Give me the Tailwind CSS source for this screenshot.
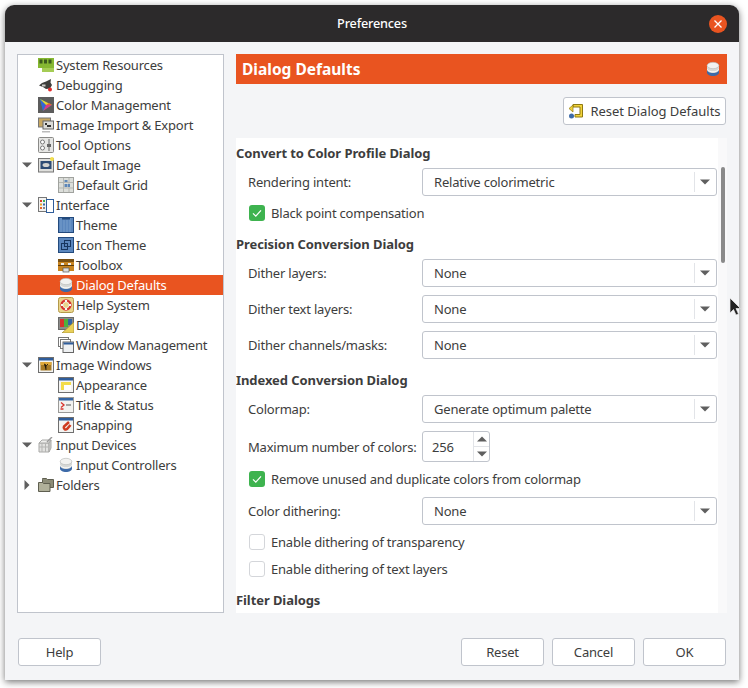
<!DOCTYPE html>
<html lang="en">
<head>
  <meta charset="UTF-8" />
  <title>Preferences</title>
  <script src="https://cdn.jsdelivr.net/npm/@tailwindcss/browser@4"></script>
</head>
<body class="bg-white w-[748px] h-[688px] pl-[5px] pt-[5px] font-['Noto_Sans',sans-serif] text-[13px] tracking-[-0.2px] text-[#3d3d3d] overflow-hidden">

  <!-- shared icons -->
  <svg width="0" height="0" class="absolute">
    <symbol id="i-db" viewBox="0 0 16 16">
      <path d="M2 11.500c0 2.200 2.800 3.500 6 3.500s6-1.300 6-3.500V9H2z" fill="#3d6aa8"/>
      <path d="M2 8.500C2 10.500 4.800 12 8 12s6-1.500 6-3.500V4H2z" fill="#d6d8d6"/>
      <ellipse cx="8" cy="4.500" rx="5.800" ry="3.200" fill="#f2f2f0" stroke="#b4b6b4" stroke-width=".6"/>
      <path d="M2.300 8.500C3.500 10 5.500 10.800 8 10.800s4.500-.8 5.700-2.300" fill="none" stroke="#fff" stroke-width=".9"/>
    </symbol>
    <symbol id="i-arrow-down" viewBox="0 0 10 10"><path d="M0 2.500h10L5 7.500z" fill="#5f5f5f"/></symbol>
    <symbol id="i-arrow-right" viewBox="0 0 10 10"><path d="M2.500 0v10L7.500 5z" fill="#5f5f5f"/></symbol>
    <symbol id="i-check" viewBox="0 0 16 16"><rect width="16" height="16" rx="3" fill="#3eb34f"/><path d="M4 8.300l2.800 2.900L12 5.300" fill="none" stroke="#fff" stroke-width="1.200"/></symbol>
    <symbol id="i-win" viewBox="0 0 16 16"><rect x=".5" y=".5" width="15" height="15" fill="#f4f4f2" stroke="#6f6f6f"/><rect x="1" y="1" width="14" height="2.500" fill="#2f5d9b"/></symbol>
  </svg>

  <div class="relative w-[734px] h-[675px] bg-[#f4f5f7] rounded-t-[9px] shadow-[0_2px_7px_rgba(0,0,0,0.55)]">
    <!-- title bar -->
    <div class="relative h-[37px] bg-[#2c2a2b] rounded-t-[9px] flex items-center justify-center text-white font-medium text-[12.7px]">
      Preferences
      <div class="absolute right-[12px] top-[10px] w-[18px] h-[18px] rounded-full bg-[#e95420] flex items-center justify-center">
        <svg width="10" height="10" viewBox="0 0 10 10"><path d="M1.500 1.500l7 7M8.500 1.500l-7 7" stroke="#fff" stroke-width="1.300"/></svg>
      </div>
    </div>

    <div class="flex gap-[12px] px-[12px] pt-[12px]">
      <!-- tree -->
      <div class="w-[207px] h-[559px] bg-white border border-[#c0c4cc] flex flex-col leading-[20px] whitespace-nowrap">
        <div class="h-[20px] flex items-center pl-[20px] gap-[2px]">
          <svg class="w-4 h-4" viewBox="0 0 16 16"><rect y="1" width="16" height="10" fill="#86b832"/><rect y="11" x="4" width="12" height="4" fill="#a5cc55"/><rect x="1.500" y="2.500" width="3" height="4" fill="#3b5a1c"/><rect x="6" y="2.500" width="3" height="4" fill="#3b5a1c"/><rect x="10.500" y="2.500" width="3" height="4" fill="#3b5a1c"/></svg>
          <span>System Resources</span>
        </div>
        <div class="h-[20px] flex items-center pl-[20px] gap-[2px]">
          <svg class="w-4 h-4" viewBox="0 0 16 16"><path d="M1 8.500l3-2.500 4-1.500L13 2l-.5 3.500L14 8l-2 3.500-4 .5-3-2z" fill="#3f3f3d"/><path d="M4 7.500h3.500v2H4z" fill="#cfcfca"/><circle cx="12" cy="12.500" r="2" fill="#e22b2b"/></svg>
          <span>Debugging</span>
        </div>
        <div class="h-[20px] flex items-center pl-[20px] gap-[2px]">
          <svg class="w-4 h-4" viewBox="0 0 16 16"><rect width="16" height="16" fill="#5c5c5c"/><path d="M2 2l3 12 9-6z" fill="#26a269"/><path d="M2 2l3 12 3-6z" fill="#3465d8"/><path d="M8 8l-3 6 9-6z" fill="#d83a8a"/><path d="M2 2l6 6 6 0z" fill="#e8d23a"/><path d="M8 8l6 0-3-2z" fill="#e5632a"/></svg>
          <span>Color Management</span>
        </div>
        <div class="h-[20px] flex items-center pl-[20px] gap-[2px]">
          <svg class="w-4 h-4" viewBox="0 0 16 16"><rect x=".5" y="1" width="12" height="9" fill="#c8a862" stroke="#777"/><rect x="5" y="4" width="10.500" height="8" fill="#dcdcd8" stroke="#666"/><path d="M7 6h2v2H7zM11 8h2v2h-2zM9 8h2v2H9z" fill="#333"/><path d="M4 14h8v1.500H4z" fill="#bbb"/></svg>
          <span>Image Import &amp; Export</span>
        </div>
        <div class="h-[20px] flex items-center pl-[20px] gap-[2px]">
          <svg class="w-4 h-4" viewBox="0 0 16 16"><rect x=".5" y=".5" width="15" height="15" rx="1" fill="#e6e6e4" stroke="#8a8a88"/><circle cx="4.500" cy="5" r="2" fill="#fff" stroke="#777"/><circle cx="4.500" cy="11" r="2" fill="#fff" stroke="#777"/><path d="M11 2v12" stroke="#666"/><rect x="9" y="7" width="4" height="3" fill="#666"/></svg>
          <span>Tool Options</span>
        </div>
        <div class="h-[20px] flex items-center pl-[4px]">
          <svg class="w-[10px] h-[10px] mr-[6px]" viewBox="0 0 10 10"><use href="#i-arrow-down"/></svg>
          <svg class="w-4 h-4 mr-[2px]" viewBox="0 0 16 16"><rect x=".5" y="1.500" width="15" height="13.500" fill="#dfdfdc" stroke="#777"/><rect x="2.500" y="4" width="11" height="8" fill="#2e4c74"/><ellipse cx="8" cy="8" rx="3.500" ry="2" fill="#d4d4d0"/><circle cx="14" cy="2" r="2" fill="#f4e04d"/></svg>
          <span>Default Image</span>
        </div>
        <div class="h-[20px] flex items-center pl-[40px] gap-[2px]">
          <svg class="w-4 h-4" viewBox="0 0 16 16"><rect x=".5" y=".5" width="15" height="15" fill="#dcdeda" stroke="#a0a29e"/><path d="M5.500 1v14M11 1v14M1 5.500h14M1 11h14" stroke="#b5b7b3"/><path d="M6.500 3h3v2h-3zM6.500 7h3v3h-3zM10 7h2v3h-2z" fill="#5d86b8"/></svg>
          <span>Default Grid</span>
        </div>
        <div class="h-[20px] flex items-center pl-[4px]">
          <svg class="w-[10px] h-[10px] mr-[6px]" viewBox="0 0 10 10"><use href="#i-arrow-down"/></svg>
          <svg class="w-4 h-4 mr-[2px]" viewBox="0 0 16 16"><rect x=".5" y=".5" width="8" height="14" fill="#f2f2f0" stroke="#777"/><rect x="8.500" y="2.500" width="7" height="13" fill="#fff" stroke="#2f5d9b"/><rect x="2" y="3" width="2" height="2" fill="#d83a2a"/><rect x="5" y="3" width="2" height="2" fill="#3eb34f"/><rect x="2" y="6.500" width="2" height="2" fill="#e8a72a"/><rect x="5" y="6.500" width="2" height="2" fill="#3465a4"/><rect x="2" y="10" width="2" height="2" fill="#e5632a"/><rect x="5" y="10" width="2" height="2" fill="#888"/></svg>
          <span>Interface</span>
        </div>
        <div class="h-[20px] flex items-center pl-[40px] gap-[2px]">
          <svg class="w-4 h-4" viewBox="0 0 16 16"><rect x=".5" y=".5" width="15" height="15" fill="#5a86bd" stroke="#234a7d"/><path d="M3 1v14M6 3v12M9 3v12M12 1v14" stroke="#7ea4d1" stroke-width=".8"/><path d="M4 .5h8v2H4z" fill="#234a7d"/></svg>
          <span>Theme</span>
        </div>
        <div class="h-[20px] flex items-center pl-[40px] gap-[2px]">
          <svg class="w-4 h-4" viewBox="0 0 16 16"><rect x=".5" y=".5" width="15" height="15" fill="#5a86bd" stroke="#234a7d"/><rect x="3.500" y="6.500" width="6" height="6" fill="none" stroke="#17365f"/><rect x="6.500" y="3.500" width="6" height="6" fill="none" stroke="#17365f"/></svg>
          <span>Icon Theme</span>
        </div>
        <div class="h-[20px] flex items-center pl-[40px] gap-[2px]">
          <svg class="w-4 h-4" viewBox="0 0 16 16"><rect y="2" width="16" height="12" fill="#c98520"/><rect y="2" width="16" height="3" fill="#7a5012"/><path d="M0 8.500h16" stroke="#5e3d0c"/><rect x="3" y="6" width="3" height="2" fill="#eee"/><rect x="10" y="6" width="3" height="2" fill="#eee"/><rect x="5" y="11" width="6" height="4" fill="#ddd" stroke="#555" stroke-width=".7"/></svg>
          <span>Toolbox</span>
        </div>
        <div class="h-[20px] flex items-center pl-[40px] gap-[2px] bg-[#e95420] text-white">
          <svg class="w-4 h-4"><use href="#i-db"/></svg>
          <span>Dialog Defaults</span>
        </div>
        <div class="h-[20px] flex items-center pl-[40px] gap-[2px]">
          <svg class="w-4 h-4" viewBox="0 0 16 16"><rect x=".5" y=".5" width="15" height="15" rx="2" fill="#e9d58c" stroke="#b49a4a"/><circle cx="8" cy="8" r="5.500" fill="#f6f6f4"/><circle cx="8" cy="8" r="4.500" fill="none" stroke="#d6332c" stroke-width="2.400"/><path d="M3 8h10M8 3v10" stroke="#f6f6f4" stroke-width="2.200"/><circle cx="8" cy="8" r="2.700" fill="#e9d58c"/></svg>
          <span>Help System</span>
        </div>
        <div class="h-[20px] flex items-center pl-[40px] gap-[2px]">
          <svg class="w-4 h-4" viewBox="0 0 16 16"><rect x=".5" y=".5" width="15" height="12" fill="#8d8d8b" stroke="#6a6a68"/><rect x="2" y="2" width="4" height="8" fill="#d8332c"/><rect x="6" y="2" width="4" height="8" fill="#4fb03c"/><rect x="10" y="2" width="4" height="6" fill="#3465a4"/><path d="M16 5v11H4z" fill="#e8cf5a" stroke="#9c8730" stroke-width=".7"/></svg>
          <span>Display</span>
        </div>
        <div class="h-[20px] flex items-center pl-[40px] gap-[2px]">
          <svg class="w-4 h-4" viewBox="0 0 16 16"><rect x=".5" y=".5" width="10" height="9" fill="#fff" stroke="#777"/><rect x="2.500" y="2.500" width="10" height="9" fill="#fff" stroke="#777"/><rect x="5" y="5" width="10.500" height="10.500" fill="#eef0f2" stroke="#666"/><rect x="5.500" y="5.500" width="10" height="2" fill="#2f5d9b"/></svg>
          <span>Window Management</span>
        </div>
        <div class="h-[20px] flex items-center pl-[4px]">
          <svg class="w-[10px] h-[10px] mr-[6px]" viewBox="0 0 10 10"><use href="#i-arrow-down"/></svg>
          <svg class="w-4 h-4 mr-[2px]" viewBox="0 0 16 16"><use href="#i-win"/><rect x="2.500" y="5" width="11" height="8.500" fill="#a87a24"/><path d="M2.500 5h11v3h-11z" fill="#e0a93a"/><path d="M8 13V8l-2-1M8 9l2-2" stroke="#3a2a10"/></svg>
          <span>Image Windows</span>
        </div>
        <div class="h-[20px] flex items-center pl-[40px] gap-[2px]">
          <svg class="w-4 h-4" viewBox="0 0 16 16"><use href="#i-win"/><rect x="3" y="5" width="10" height="8" fill="#f3dc4a"/><rect x="6" y="8" width="7" height="5" fill="#fff"/></svg>
          <span>Appearance</span>
        </div>
        <div class="h-[20px] flex items-center pl-[40px] gap-[2px]">
          <svg class="w-4 h-4" viewBox="0 0 16 16"><rect x=".5" y=".5" width="15" height="15" fill="#f2f2f0" stroke="#9a9a98"/><rect x="1" y="1" width="14" height="2.500" fill="#3465a4"/><path d="M3 5.500l3 2.500-3 2.500M2.500 12h3" fill="none" stroke="#d8332c" stroke-width="1.300"/><path d="M8 8h5" stroke="#555"/></svg>
          <span>Title &amp; Status</span>
        </div>
        <div class="h-[20px] flex items-center pl-[40px] gap-[2px]">
          <svg class="w-4 h-4" viewBox="0 0 16 16"><use href="#i-win"/><path d="M11 5L6 9.500a2 2 0 0 0 3 2.500l3.500-4" fill="none" stroke="#cf3b20" stroke-width="2.600"/></svg>
          <span>Snapping</span>
        </div>
        <div class="h-[20px] flex items-center pl-[4px]">
          <svg class="w-[10px] h-[10px] mr-[6px]" viewBox="0 0 10 10"><use href="#i-arrow-down"/></svg>
          <svg class="w-4 h-4 mr-[2px]" viewBox="0 0 16 16"><path d="M1 6h10v9H1z" fill="#e2e2e0" stroke="#a9a9a7"/><path d="M1 6l3-3h9l-2 3z" fill="#efefed" stroke="#a9a9a7"/><path d="M11 6l2-3v8l-2 4z" fill="#cfcfcd" stroke="#a9a9a7"/><path d="M4 6v9M7.500 6v9M1 10h10" stroke="#b5b5b3"/><path d="M9 5l5-5" stroke="#999" stroke-width="1.400"/></svg>
          <span>Input Devices</span>
        </div>
        <div class="h-[20px] flex items-center pl-[40px] gap-[2px]">
          <svg class="w-4 h-4"><use href="#i-db"/></svg>
          <span>Input Controllers</span>
        </div>
        <div class="h-[20px] flex items-center pl-[4px]">
          <svg class="w-[10px] h-[10px] mr-[6px]" viewBox="0 0 10 10"><use href="#i-arrow-right"/></svg>
          <svg class="w-4 h-4 mr-[2px]" viewBox="0 0 16 16"><path d="M4.500 2.500v-1h4l1 1h6v8h-11z" fill="#8c8c78" stroke="#5f5f50"/><path d="M.5 5.500h4l1 1h6.500v8H.5z" fill="#b0b09a" stroke="#5f5f50"/></svg>
          <span>Folders</span>
        </div>
      </div>

      <!-- right side -->
      <div class="w-[491px] h-[559px] flex flex-col">
        <div class="h-[30px] bg-[#e95420] text-white font-bold text-[15.5px] tracking-normal flex items-center justify-between pl-[6px] pr-[6px]">
          <span class="pt-[2px]">Dialog Defaults</span>
          <svg class="w-4 h-4"><use href="#i-db"/></svg>
        </div>
        <div class="flex justify-end pr-[1px] mt-[13px]">
          <div class="h-[28px] w-[163px] bg-white border border-[#c0c4cc] rounded-[3px] flex items-center justify-center gap-[6px] tracking-[-0.03px]">
            <svg class="w-4 h-4" viewBox="0 0 16 16"><path d="M5 4V1.500h9.500v12.500H7v-2.500h5V4z" fill="#f2d33a" stroke="#8f7a12"/><path d="M1 5.500L5 2v7z" fill="#f2d33a" stroke="#8f7a12" stroke-width=".7"/><circle cx="3.500" cy="13" r="2.500" fill="#3d6aa8"/></svg>
            <span class="pt-[2px]">Reset Dialog Defaults</span>
          </div>
        </div>

        <!-- scrolled settings -->
        <div class="mt-[13px] h-[475px] flex overflow-hidden">
          <div class="w-[482px] bg-white pt-[5px] overflow-hidden">
            <div class="h-[20px] font-bold tracking-[-0.08px] leading-[20px]">Convert to Color Profile Dialog</div>
            <div class="mt-[5px] h-[28px] flex items-center pl-[12px]">
              <span class="w-[174px] pt-[2px]">Rendering intent:</span>
              <div class="w-[295px] h-[28px] bg-white border border-[#c0c4cc] rounded-[3px] flex items-center pl-[11px]">
                <span class="flex-1 pt-[2px]">Relative colorimetric</span>
                <div class="w-[21px] h-[20px] border-l border-[#e2e4e8] flex items-center justify-center"><svg class="w-[10px] h-[10px]"><use href="#i-arrow-down"/></svg></div>
                <div class="w-[1px]"></div>
              </div>
            </div>
            <div class="mt-[9px] h-[16px] flex items-center pl-[13px] gap-[6px]">
              <svg class="w-4 h-4"><use href="#i-check"/></svg>
              <span class="pt-[2px]">Black point compensation</span>
            </div>
            <div class="mt-[13px] h-[20px] font-bold tracking-[-0.08px] leading-[20px]">Precision Conversion Dialog</div>
            <div class="mt-[5px] h-[28px] flex items-center pl-[12px]">
              <span class="w-[174px] pt-[2px]">Dither layers:</span>
              <div class="w-[295px] h-[28px] bg-white border border-[#c0c4cc] rounded-[3px] flex items-center pl-[11px]">
                <span class="flex-1 pt-[2px]">None</span>
                <div class="w-[21px] h-[20px] border-l border-[#e2e4e8] flex items-center justify-center"><svg class="w-[10px] h-[10px]"><use href="#i-arrow-down"/></svg></div>
                <div class="w-[1px]"></div>
              </div>
            </div>
            <div class="mt-[8px] h-[28px] flex items-center pl-[12px]">
              <span class="w-[174px] pt-[2px]">Dither text layers:</span>
              <div class="w-[295px] h-[28px] bg-white border border-[#c0c4cc] rounded-[3px] flex items-center pl-[11px]">
                <span class="flex-1 pt-[2px]">None</span>
                <div class="w-[21px] h-[20px] border-l border-[#e2e4e8] flex items-center justify-center"><svg class="w-[10px] h-[10px]"><use href="#i-arrow-down"/></svg></div>
                <div class="w-[1px]"></div>
              </div>
            </div>
            <div class="mt-[8px] h-[28px] flex items-center pl-[12px]">
              <span class="w-[174px] pt-[2px]">Dither channels/masks:</span>
              <div class="w-[295px] h-[28px] bg-white border border-[#c0c4cc] rounded-[3px] flex items-center pl-[11px]">
                <span class="flex-1 pt-[2px]">None</span>
                <div class="w-[21px] h-[20px] border-l border-[#e2e4e8] flex items-center justify-center"><svg class="w-[10px] h-[10px]"><use href="#i-arrow-down"/></svg></div>
                <div class="w-[1px]"></div>
              </div>
            </div>
            <div class="mt-[11px] h-[20px] font-bold tracking-[-0.08px] leading-[20px]">Indexed Conversion Dialog</div>
            <div class="mt-[5px] h-[28px] flex items-center pl-[12px]">
              <span class="w-[174px] pt-[2px]">Colormap:</span>
              <div class="w-[295px] h-[28px] bg-white border border-[#c0c4cc] rounded-[3px] flex items-center pl-[11px]">
                <span class="flex-1 pt-[2px]">Generate optimum palette</span>
                <div class="w-[21px] h-[20px] border-l border-[#e2e4e8] flex items-center justify-center"><svg class="w-[10px] h-[10px]"><use href="#i-arrow-down"/></svg></div>
                <div class="w-[1px]"></div>
              </div>
            </div>
            <div class="mt-[8px] h-[31px] flex items-center pl-[12px]">
              <span class="w-[174px] pt-[2px]">Maximum number of colors:</span>
              <div class="w-[68px] h-[31px] bg-white border border-[#c0c4cc] rounded-[3px] flex items-center pl-[9px]">
                <span class="flex-1 pt-[2px]">256</span>
                <div class="w-[16px] h-full flex flex-col border-l border-[#e2e4e8]">
                  <div class="flex-1 border-b border-[#e2e4e8] flex items-center justify-center"><svg class="w-[10px] h-[10px] rotate-180"><use href="#i-arrow-down"/></svg></div>
                  <div class="flex-1 flex items-center justify-center"><svg class="w-[10px] h-[10px]"><use href="#i-arrow-down"/></svg></div>
                </div>
              </div>
            </div>
            <div class="mt-[9px] h-[16px] flex items-center pl-[13px] gap-[6px]">
              <svg class="w-4 h-4"><use href="#i-check"/></svg>
              <span class="pt-[2px]">Remove unused and duplicate colors from colormap</span>
            </div>
            <div class="mt-[10px] h-[28px] flex items-center pl-[12px]">
              <span class="w-[174px] pt-[2px]">Color dithering:</span>
              <div class="w-[295px] h-[28px] bg-white border border-[#c0c4cc] rounded-[3px] flex items-center pl-[11px]">
                <span class="flex-1 pt-[2px]">None</span>
                <div class="w-[21px] h-[20px] border-l border-[#e2e4e8] flex items-center justify-center"><svg class="w-[10px] h-[10px]"><use href="#i-arrow-down"/></svg></div>
                <div class="w-[1px]"></div>
              </div>
            </div>
            <div class="mt-[9px] h-[16px] flex items-center pl-[13px] gap-[6px]">
              <div class="w-4 h-4 bg-white border border-[#d4d6da] rounded-[3px]"></div>
              <span class="pt-[2px]">Enable dithering of transparency</span>
            </div>
            <div class="mt-[11px] h-[16px] flex items-center pl-[13px] gap-[6px]">
              <div class="w-4 h-4 bg-white border border-[#d4d6da] rounded-[3px]"></div>
              <span class="pt-[2px]">Enable dithering of text layers</span>
            </div>
            <div class="mt-[13px] h-[20px] font-bold tracking-[-0.08px] leading-[20px]">Filter Dialogs</div>
          </div>
          <div class="w-[9px] bg-[#f9f9fa] pl-[3px] pt-[29px]">
            <div class="w-[4px] h-[96px] rounded-full bg-[#8a8a8a]"></div>
          </div>
        </div>
      </div>
    </div>

    <!-- footer buttons -->
    <div class="flex items-center gap-[8px] pl-[13px] pr-[13px] mt-[25px]">
      <div class="w-[83px] h-[28px] pt-[2px] bg-white border border-[#c0c4cc] rounded-[3px] flex items-center justify-center mr-auto">Help</div>
      <div class="w-[83px] h-[28px] pt-[2px] bg-white border border-[#c0c4cc] rounded-[3px] flex items-center justify-center">Reset</div>
      <div class="w-[83px] h-[28px] pt-[2px] bg-white border border-[#c0c4cc] rounded-[3px] flex items-center justify-center">Cancel</div>
      <div class="w-[83px] h-[28px] pt-[2px] bg-white border border-[#c0c4cc] rounded-[3px] flex items-center justify-center">OK</div>
    </div>

    <!-- mouse pointer lying over the window edge -->
    <svg class="absolute left-[724px] top-[292px]" width="12" height="20" viewBox="0 0 12 20"><path d="M1 1v15l3.500-3.500L7 18l2.500-1-2.500-5.500h4.500z" fill="#222" stroke="#eee" stroke-width=".7"/></svg>
  </div>
</body>
</html>
